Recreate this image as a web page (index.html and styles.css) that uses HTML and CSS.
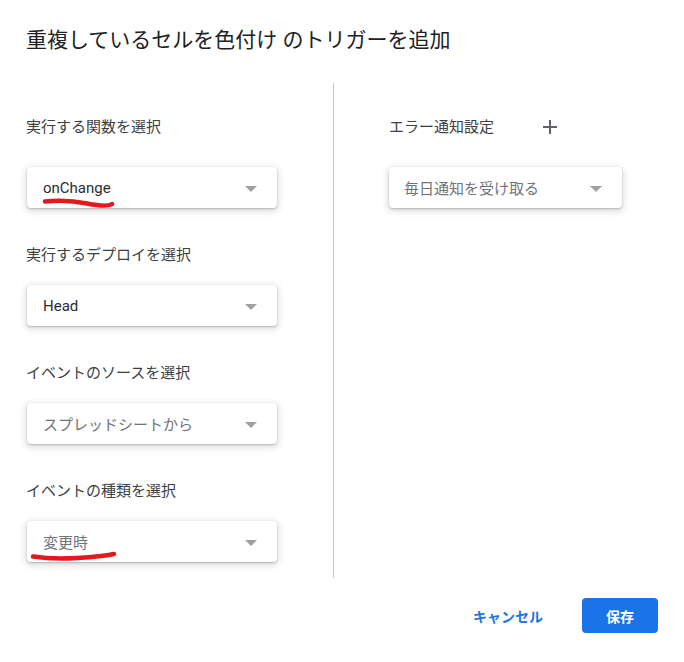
FILE: index.html
```html
<!DOCTYPE html>
<html>
<head>
    <title>トリガーを追加</title>
    <link rel="stylesheet" href="styles.css">
</head>
<body>
    <div class="dialog">
        <h1 class="dialog-title">重複しているセルを色付け のトリガーを追加</h1>

        <div class="columns">
            <div class="column column-left">
                <div class="field field-first">
                    <div class="field-label">実行する関数を選択</div>
                    <div class="select">
                        <span class="select-value">onChange</span>
                        <span class="select-arrow"></span>
                        <svg class="scribble" width="100" height="41" viewBox="0 0 100 41">
                            <path d="M18 34.5 Q 40 32.5 60 36.5 T 85 37" />
                        </svg>
                    </div>
                </div>

                <div class="field">
                    <div class="field-label">実行するデプロイを選択</div>
                    <div class="select">
                        <span class="select-value">Head</span>
                        <span class="select-arrow"></span>
                    </div>
                </div>

                <div class="field">
                    <div class="field-label">イベントのソースを選択</div>
                    <div class="select">
                        <span class="select-value muted">スプレッドシートから</span>
                        <span class="select-arrow"></span>
                    </div>
                </div>

                <div class="field">
                    <div class="field-label">イベントの種類を選択</div>
                    <div class="select">
                        <span class="select-value muted">変更時</span>
                        <span class="select-arrow"></span>
                        <svg class="scribble" width="100" height="41" viewBox="0 0 100 41">
                            <path d="M6 35.5 Q 25 38.5 50 37 T 87 33" />
                        </svg>
                    </div>
                </div>
            </div>

            <div class="column column-right">
                <div class="field field-first">
                    <div class="field-label">
                        エラー通知設定
                        <svg class="plus" width="14" height="14" viewBox="0 0 14 14">
                            <path d="M7 0 V14 M0 7 H14" />
                        </svg>
                    </div>
                    <div class="select select-wide">
                        <span class="select-value muted">毎日通知を受け取る</span>
                        <span class="select-arrow"></span>
                    </div>
                </div>
            </div>
        </div>

        <div class="dialog-footer">
            <button class="btn btn-text">キャンセル</button>
            <button class="btn btn-primary">保存</button>
        </div>
    </div>
</body>
</html>
```

FILE: styles.css
```css
body {
    margin: 0;
    background: #fff;
    font-family: Roboto, "Noto Sans CJK JP", sans-serif;
    color: #202124;
}

.dialog {
    padding: 0 26px;
}

.dialog-title {
    margin: 0;
    padding-top: 25px;
    font-size: 21px;
    font-weight: 400;
    line-height: 30px;
    color: #202124;
}

.columns {
    display: flex;
    margin-top: 28px;
}

.column {
    padding-top: 34px;
}

.column-left {
    width: 251px;
    padding-right: 56px;
    padding-bottom: 16px;
    border-right: 1px solid #c8c8c8;
}

.column-right {
    padding-left: 55px;
}

.field {
    margin-top: 37px;
}

.field-first {
    margin-top: 0;
}

.field-label {
    display: flex;
    align-items: center;
    font-size: 15px;
    line-height: 20px;
    color: #3c4043;
    margin-bottom: 20px;
}

.field-first .field-label {
    margin-bottom: 30px;
}

.plus {
    margin-left: 49px;
    stroke: #5f6368;
    stroke-width: 2;
}

.select {
    position: relative;
    display: flex;
    align-items: center;
    justify-content: space-between;
    width: 250px;
    height: 41px;
    margin-left: 1px;
    padding: 0 20px 0 16px;
    box-sizing: border-box;
    background: #fff;
    border-radius: 4px;
    box-shadow: 0 1px 2px rgba(60, 64, 67, 0.3), 0 2px 6px 2px rgba(60, 64, 67, 0.15);
}

.select-wide {
    width: 233px;
    margin-left: 0;
    padding-left: 15px;
}

.select-value {
    font-size: 15px;
    color: #2b2d30;
}

.select-value.muted {
    color: #70757a;
}

.select-arrow {
    width: 0;
    height: 0;
    margin-top: 2px;
    border-left: 6px solid transparent;
    border-right: 6px solid transparent;
    border-top: 6px solid #a0a0a0;
}

/* hand-drawn red marks over the values */
.scribble {
    position: absolute;
    left: 0;
    top: 0;
    fill: none;
    stroke: #e3191c;
    stroke-width: 4.5;
    stroke-linecap: round;
}

.dialog-footer {
    display: flex;
    justify-content: flex-end;
    align-items: center;
    margin-top: 20px;
}

.btn {
    font-family: Roboto, "Noto Sans CJK JP", sans-serif;
    font-size: 14px;
    font-weight: 700;
    border: none;
    border-radius: 4px;
    height: 35px;
    cursor: pointer;
}

.btn-text {
    background: transparent;
    color: #1a73e8;
    padding: 0 23px;
    margin-right: 16px;
}

.btn-primary {
    width: 76px;
    background: #1a73e8;
    color: #fff;
}
```
